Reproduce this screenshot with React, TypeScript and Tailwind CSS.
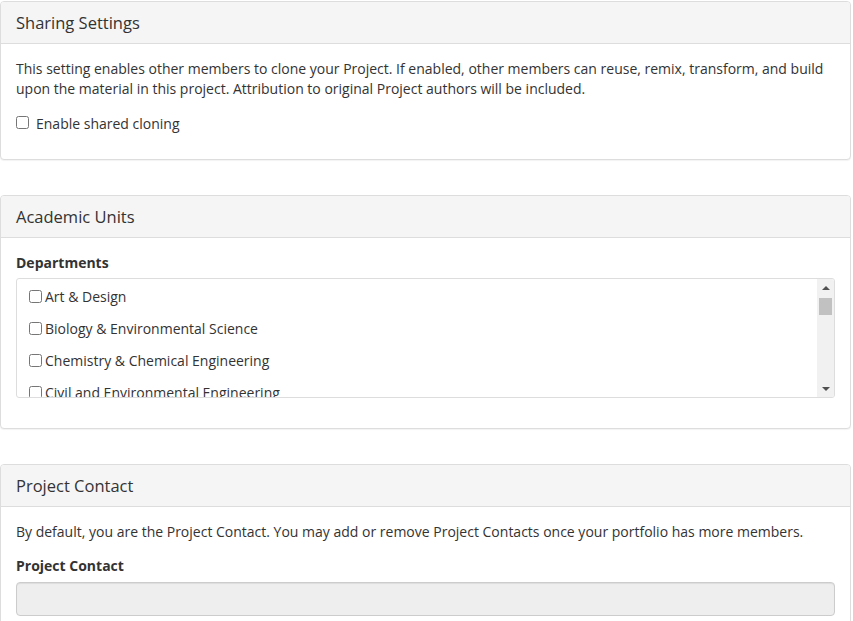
import React from "react";

const departments = [
  "Art & Design",
  "Biology & Environmental Science",
  "Chemistry & Chemical Engineering",
  "Civil and Environmental Engineering",
  "Computer Science",
  "Economics",
];

const Panel = ({ title, children }: { title: string; children: React.ReactNode }) => (
  <div className="w-[851px] mb-[35px] border border-[#ddd] rounded-[4px] bg-white shadow-[0_1px_1px_rgba(0,0,0,0.05)]">
    <div className="h-[42px] px-[15px] flex items-center bg-[#f5f5f5] border-b border-[#ddd] rounded-t-[3px] text-[16.5px] text-[#333]">
      {title}
    </div>
    <div className="px-[15px] pt-[15px] pb-[15px]">{children}</div>
  </div>
);

export default function App() {
  return (
    <div
      className="w-[853px] h-[621px] overflow-hidden bg-white pt-px text-[14px] leading-[20px] text-[#333]"
      style={{ fontFamily: '"Open Sans", sans-serif' }}
    >
      <Panel title="Sharing Settings">
        <p className="mb-[15px]">
          This setting enables other members to clone your Project. If enabled, other members can reuse, remix,
          transform, and build upon the material in this project. Attribution to original Project authors will be
          included.
        </p>
        <label className="flex items-center gap-[7px] mb-[10px]">
          <input type="checkbox" className="w-[13px] h-[13px] m-0 -mt-[3px]" />
          Enable shared cloning
        </label>
      </Panel>

      <Panel title="Academic Units">
        <div className="font-bold mb-[5px]">Departments</div>
        <div className="flex h-[120px] mb-[15px] border border-[#ddd] rounded-[3px] overflow-hidden">
          <div className="flex-1 pl-[12px] pt-[2px] overflow-hidden">
            {departments.map((d) => (
              <label key={d} className="flex items-center gap-[3px] h-[32px] whitespace-nowrap">
                <input type="checkbox" className="w-[13px] h-[13px] m-0 -mt-[1px]" />
                {d}
              </label>
            ))}
          </div>
          <div className="w-[17px] bg-[#f1f1f1] flex flex-col items-center">
            <div className="h-[17px] flex items-center justify-center">
              <div className="w-0 h-0 border-l-[4px] border-r-[4px] border-b-[4px] border-l-transparent border-r-transparent border-b-[#505050]" />
            </div>
            <div className="w-[13px] h-[17px] mt-[2px] bg-[#c1c1c1]" />
            <div className="flex-1" />
            <div className="h-[17px] flex items-center justify-center">
              <div className="w-0 h-0 border-l-[4px] border-r-[4px] border-t-[4px] border-l-transparent border-r-transparent border-t-[#505050]" />
            </div>
          </div>
        </div>
      </Panel>

      <Panel title="Project Contact">
        <p className="mb-[14px]">
          By default, you are the Project Contact. You may add or remove Project Contacts once your portfolio has more
          members.
        </p>
        <div className="font-bold mb-[6px]">Project Contact</div>
        <div className="h-[34px] border border-[#ccc] rounded-[4px] bg-[#eee] shadow-[inset_0_1px_1px_rgba(0,0,0,0.075)]" />
      </Panel>
    </div>
  );
}
